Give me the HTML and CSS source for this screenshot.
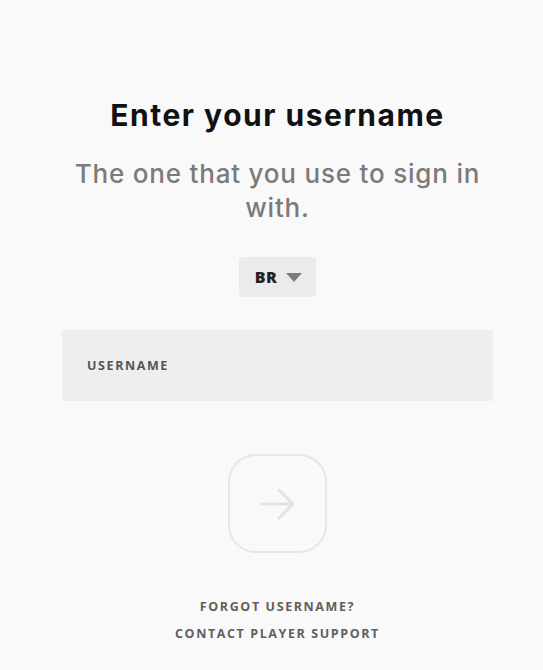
FILE: index.html
```html
<!DOCTYPE html>
<html lang="en">
<head>
<meta charset="utf-8">
<title>Enter your username</title>
<link rel="stylesheet" href="styles.css">
</head>
<body>
<main class="page">
  <h1 class="title">Enter your username</h1>
  <p class="subtitle">The one that you use to sign in with.</p>
  <button class="region" type="button">
    <span class="region-code">BR</span>
    <svg class="caret" width="16" height="10" viewBox="0 0 16 10"><path d="M0 0h16L8 9z" fill="#7b7b7b"/></svg>
  </button>
  <label class="field">
    <span class="field-label">USERNAME</span>
  </label>
  <button class="next" type="button" aria-label="Next">
    <svg width="36" height="36" viewBox="0 0 36 36" fill="none" stroke="#e2e2e2" stroke-width="3" stroke-linecap="round" stroke-linejoin="round">
      <path d="M2 18h31M19 4l14 14-14 14"/>
    </svg>
  </button>
  <nav class="links">
    <a class="link" href="#">FORGOT USERNAME?</a>
    <a class="link" href="#">CONTACT PLAYER SUPPORT</a>
  </nav>
</main>
</body>
</html>
```

FILE: styles.css
```css
* { box-sizing: border-box; }
html, body { margin: 0; padding: 0; background: #f9f9f9; }
body { font-family: "Inter", "Noto Sans", sans-serif; }
.page {
  width: 543px;
  height: 670px;
  display: flex;
  flex-direction: column;
  align-items: center;
  padding-top: 95px;
  padding-left: 12px;
}
.title {
  margin: 0;
  font-size: 30px;
  font-weight: 700;
  color: #111;
  line-height: 40px;
  letter-spacing: 1.5px;
}
.subtitle {
  margin: 22px 0 0;
  width: 450px;
  text-align: center;
  font-size: 26px;
  line-height: 34px;
  color: #7b7b7b;
  font-weight: 500;
  letter-spacing: 0.8px;
}
.region {
  margin-top: 32px;
  width: 77px;
  height: 40px;
  border: none;
  border-radius: 4px;
  background: #ebebeb;
  display: flex;
  align-items: center;
  justify-content: center;
  gap: 9px;
  padding: 0 0 0 2px;
  font-family: "Open Sans", sans-serif;
}
.region-code {
  font-size: 16px;
  font-weight: 800;
  color: #222;
  letter-spacing: 0.5px;
}
.caret { margin-top: 1px; }
.field {
  margin-top: 33px;
  width: 431px;
  height: 71px;
  background: #eeeeee;
  border-radius: 2px;
  display: flex;
  align-items: center;
  padding-left: 25px;
}
.field-label {
  font-family: "Open Sans", sans-serif;
  font-size: 12.5px;
  font-weight: 700;
  color: #555;
  letter-spacing: 1.6px;
}
.next {
  margin-top: 53px;
  width: 99px;
  height: 99px;
  border: 2px solid #e6e6e6;
  border-radius: 28px;
  background: transparent;
  display: flex;
  align-items: center;
  justify-content: center;
  padding: 0;
}
.links {
  margin-top: 45px;
  display: flex;
  flex-direction: column;
  align-items: center;
  gap: 10px;
}
.link {
  font-family: "Open Sans", sans-serif;
  font-size: 12.5px;
  font-weight: 700;
  color: #5f5f5f;
  letter-spacing: 1.6px;
  text-decoration: none;
  line-height: 17px;
}
```
